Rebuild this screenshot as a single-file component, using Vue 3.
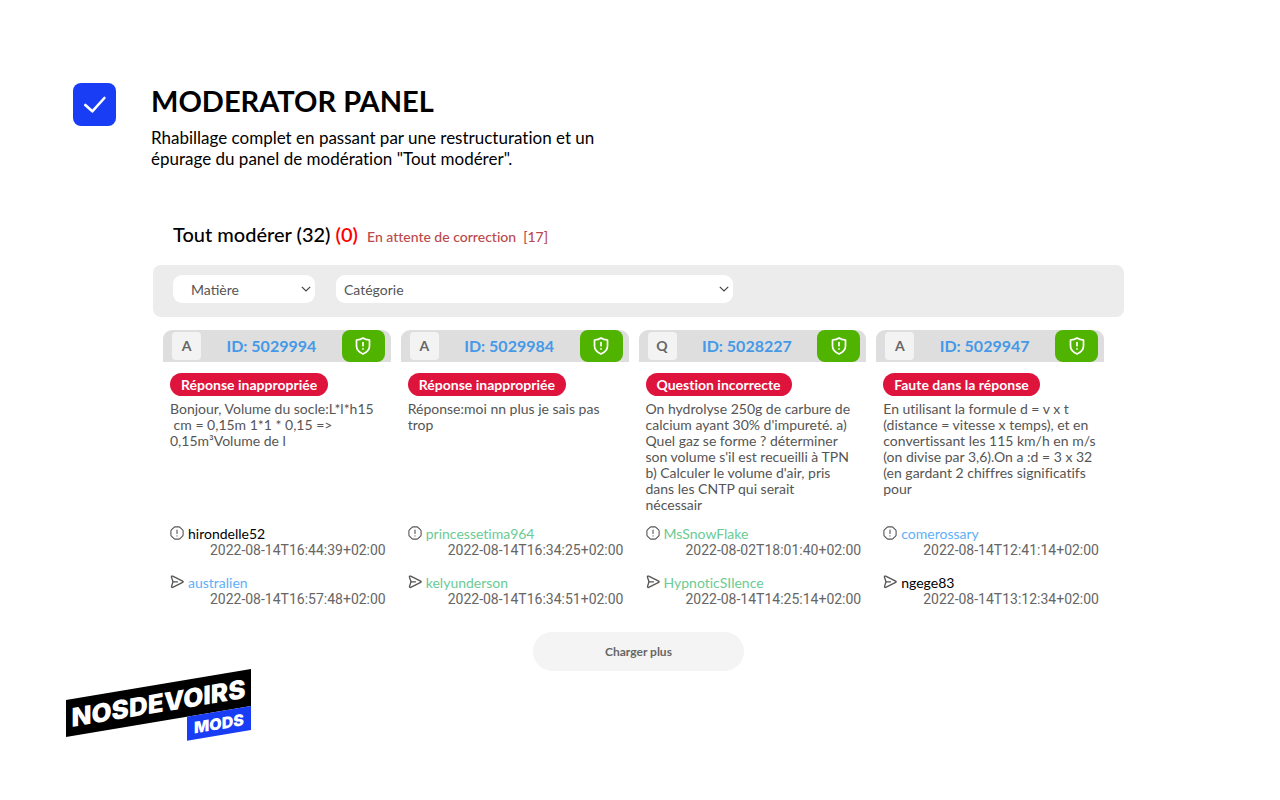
<script setup>
const cards = [
  {
    kind: 'A', id: 5029994, reason: 'Réponse inappropriée',
    text: 'Bonjour, Volume du socle:L*l*h15\n cm = 0,15m 1*1 * 0,15 =>\n0,15m³Volume de l',
    reporter: { name: 'hirondelle52', tone: 'plain', date: '2022-08-14T16:44:39+02:00' },
    author: { name: 'australien', tone: 'blue', date: '2022-08-14T16:57:48+02:00' }
  },
  {
    kind: 'A', id: 5029984, reason: 'Réponse inappropriée',
    text: 'Réponse:moi nn plus je sais pas\ntrop',
    reporter: { name: 'princessetima964', tone: 'green', date: '2022-08-14T16:34:25+02:00' },
    author: { name: 'kelyunderson', tone: 'green', date: '2022-08-14T16:34:51+02:00' }
  },
  {
    kind: 'Q', id: 5028227, reason: 'Question incorrecte',
    text: "On hydrolyse 250g de carbure de\ncalcium ayant 30% d'impureté. a)\nQuel gaz se forme ? déterminer\nson volume s'il est recueilli à TPN\nb) Calculer le volume d'air, pris\ndans les CNTP qui serait\nnécessair",
    reporter: { name: 'MsSnowFlake', tone: 'green', date: '2022-08-02T18:01:40+02:00' },
    author: { name: 'HypnoticSIlence', tone: 'green', date: '2022-08-14T14:25:14+02:00' }
  },
  {
    kind: 'A', id: 5029947, reason: 'Faute dans la réponse',
    text: 'En utilisant la formule d = v x t\n(distance = vitesse x temps), et en\nconvertissant les 115 km/h en m/s\n(on divise par 3,6).On a :d = 3 x 32\n(en gardant 2 chiffres significatifs\npour',
    reporter: { name: 'comerossary', tone: 'blue', date: '2022-08-14T12:41:14+02:00' },
    author: { name: 'ngege83', tone: 'plain', date: '2022-08-14T13:12:34+02:00' }
  }
]
</script>

<template>
  <main class="page">
    <header class="intro">
      <span class="tile">
        <svg width="43" height="43" viewBox="0 0 43 43" fill="none" aria-hidden="true">
          <path d="M12.300 22l7 6.300L31.400 15" stroke="#fff" stroke-width="2.600" stroke-linecap="round" stroke-linejoin="round" />
        </svg>
      </span>
      <div>
        <h1>MODERATOR PANEL</h1>
        <p class="lead">Rhabillage complet en passant par une restructuration et un<br>épurage du panel de modération "Tout modérer".</p>
      </div>
    </header>

    <section class="panel">
      <h2>Tout modérer (32) <span class="zero">(0)</span><a href="#" class="pending">En attente de correction&nbsp; [17]</a></h2>

      <div class="filters">
        <div class="field subject">
          <select aria-label="Matière"><option>Matière</option></select>
          <svg width="10" height="6" viewBox="0 0 10 6" fill="none" aria-hidden="true"><path d="M.8.8L5 5 9.200.8" stroke="#444" stroke-width="1.200" /></svg>
        </div>
        <div class="field category">
          <select aria-label="Catégorie"><option>Catégorie</option></select>
          <svg width="10" height="6" viewBox="0 0 10 6" fill="none" aria-hidden="true"><path d="M.8.8L5 5 9.200.8" stroke="#444" stroke-width="1.200" /></svg>
        </div>
      </div>

      <div class="cards">
        <article v-for="card in cards" :key="card.id" class="card">
          <div class="bar">
            <span class="kind">{{ card.kind }}</span>
            <a href="#" class="id">ID: {{ card.id }}</a>
            <button type="button" class="shield" aria-label="Modérer">
              <svg width="16" height="18" viewBox="0 0 16 18" fill="none" stroke="#fff" stroke-width="1.700" stroke-linecap="round" stroke-linejoin="round" aria-hidden="true">
                <path d="M8 1C6.300 2.300 3.900 2.900 1.500 3v6c0 3.800 2.700 6.300 6.500 8 3.800-1.700 6.500-4.200 6.500-8V3C12.100 2.900 9.700 2.300 8 1z" />
                <path d="M8 5.500v3.200M8 11.800v.1" />
              </svg>
            </button>
          </div>
          <div class="body">
            <span class="reason">{{ card.reason }}</span>
            <p class="text">{{ card.text }}</p>
            <div class="people">
              <div>
                <div class="who">
                  <svg width="14" height="14" viewBox="0 0 14 14" fill="none" stroke="#555" stroke-width="1.100" stroke-linecap="round" stroke-linejoin="round" aria-hidden="true">
                    <path d="M5 .9h4q.6 0 1 .4l2.600 2.600q.5.5.5 1.100v4q0 .6-.5 1.100L10 12.700q-.4.400-1 .4H5q-.6 0-1-.4L1.400 10.100Q.9 9.600.9 9V5q0-.6.5-1.100L4 1.300q.4-.4 1-.4z" />
                    <path d="M7 4v3.500M7 9.700v.2" />
                  </svg>
                  <a href="#" :class="card.reporter.tone">{{ card.reporter.name }}</a>
                </div>
                <time>{{ card.reporter.date }}</time>
              </div>
              <div>
                <div class="who">
                  <svg width="14" height="14" viewBox="0 0 14 14" fill="none" stroke="#555" stroke-width="1.300" stroke-linecap="round" stroke-linejoin="round" aria-hidden="true">
                    <path d="M1.400 2c-.1-.8.6-1.100 1.300-.8L12.700 6.200c.6.300.6.900 0 1.200L2.700 12.400c-.7.3-1.500-.2-1.200-.9L3 6.800z" />
                    <path d="M3 6.800H7.500" />
                  </svg>
                  <a href="#" :class="card.author.tone">{{ card.author.name }}</a>
                </div>
                <time>{{ card.author.date }}</time>
              </div>
            </div>
          </div>
        </article>
      </div>

      <button type="button" class="more">Charger plus</button>
    </section>

    <footer class="logo">
      <span class="brand">NOSDEVOIRS</span>
      <span class="mods">MODS</span>
    </footer>
  </main>
</template>

<style>
body { background: #fff; }
</style>

<style scoped>
.page {
  padding: 83px 156px 24px 153px;
  font-family: Lato, "Open Sans", sans-serif;
  font-variant-ligatures: no-common-ligatures;
  color: #000;
}
a { text-decoration: none; color: inherit; }
h1, h2, p { margin: 0; }
button, select { font-family: inherit; border: 0; }
button { cursor: pointer; padding: 0; }

.intro { display: flex; gap: 35px; margin-left: -80px; }
.tile { display: flex; width: 43px; height: 43px; border-radius: 8px; background: #183df5; }
h1 { font-size: 29px; line-height: 36px; font-weight: 700; }
.lead { margin-top: 8px; font-size: 17px; line-height: 21px; }

.panel { display: flex; flex-direction: column; margin-top: 51px; }
h2 { padding-left: 20px; font-size: 20px; line-height: 28px; font-weight: 500; }
.zero { color: #f00; font-weight: 600; }
.pending { margin-left: 9px; font-size: 14px; color: #b94a4a; }

.filters {
  display: flex;
  gap: 21px;
  margin-top: 14px;
  padding: 10px 20px 14px;
  border-radius: 8px;
  background: #ececec;
}
.field { position: relative; min-width: 0; }
.subject { flex: 0 1 142px; }
.category { flex: 0 1 397px; }
.field select {
  display: block;
  width: 100%;
  height: 28px;
  padding: 0 24px 0 8px;
  appearance: none;
  border-radius: 9px;
  background: #fff;
  color: #555;
  font-size: 14px;
}
.subject select { padding-left: 18px; }
.field svg { position: absolute; right: 4px; top: 11px; pointer-events: none; }

.cards {
  display: grid;
  grid-template-columns: repeat(4, minmax(0, 1fr));
  gap: 10px;
  margin-top: 13px;
  padding: 0 20px 0 10px;
}
.card { display: flex; flex-direction: column; }
.bar {
  display: flex;
  align-items: center;
  height: 32px;
  padding: 0 6px 0 9px;
  border-radius: 9px 9px 0 0;
  background: #dedede;
}
.kind {
  width: 29px;
  border-radius: 4px;
  background: #f3f3f3;
  color: #666;
  font-size: 14px;
  font-weight: 700;
  line-height: 28px;
  text-align: center;
}
.id { flex: 1; color: #4499e8; font-size: 16px; font-weight: 700; line-height: 32px; text-align: center; }
.shield {
  display: flex;
  align-items: center;
  justify-content: center;
  width: 43px;
  height: 32px;
  border-radius: 8px;
  background: #50b300;
}
.body { display: flex; flex: 1; flex-direction: column; align-items: flex-start; padding: 11px 5px 0 7px; }
.reason {
  padding: 0 11px;
  border-radius: 12px;
  background: #de143d;
  color: #fff;
  font-size: 14px;
  font-weight: 700;
  line-height: 23px;
}
.text { margin-top: 5px; color: #555; font-size: 14px; line-height: 16px; white-space: pre-wrap; }
.people { display: grid; gap: 17px; width: 100%; margin-top: auto; padding-top: 13px; }
.who { display: flex; align-items: flex-start; gap: 4px; font-size: 14px; line-height: 16px; }
.plain { color: #000; }
.blue { color: #60b0f8; }
.green { color: #6acb94; }
time { display: block; color: #666; font-family: Roboto, sans-serif; font-size: 14px; line-height: 16px; text-align: right; }

.more {
  align-self: center;
  width: 211px;
  height: 39px;
  margin-top: 25px;
  border-radius: 20px;
  background: #f4f4f4;
  color: #666;
  font-size: 12px;
  font-weight: 700;
}

.logo {
  display: flex;
  flex-direction: column;
  width: 185px;
  margin: 29px 0 0 -87px;
  color: #fff;
  font-family: Inter, sans-serif;
  font-weight: 900;
  text-align: center;
  transform: skewY(-9.500deg);
  transform-origin: left top;
}
.brand { background: #000; font-size: 26px; line-height: 37px; }
.mods { align-self: flex-end; width: 64px; background: #183df5; font-size: 16px; line-height: 24px; }
</style>
